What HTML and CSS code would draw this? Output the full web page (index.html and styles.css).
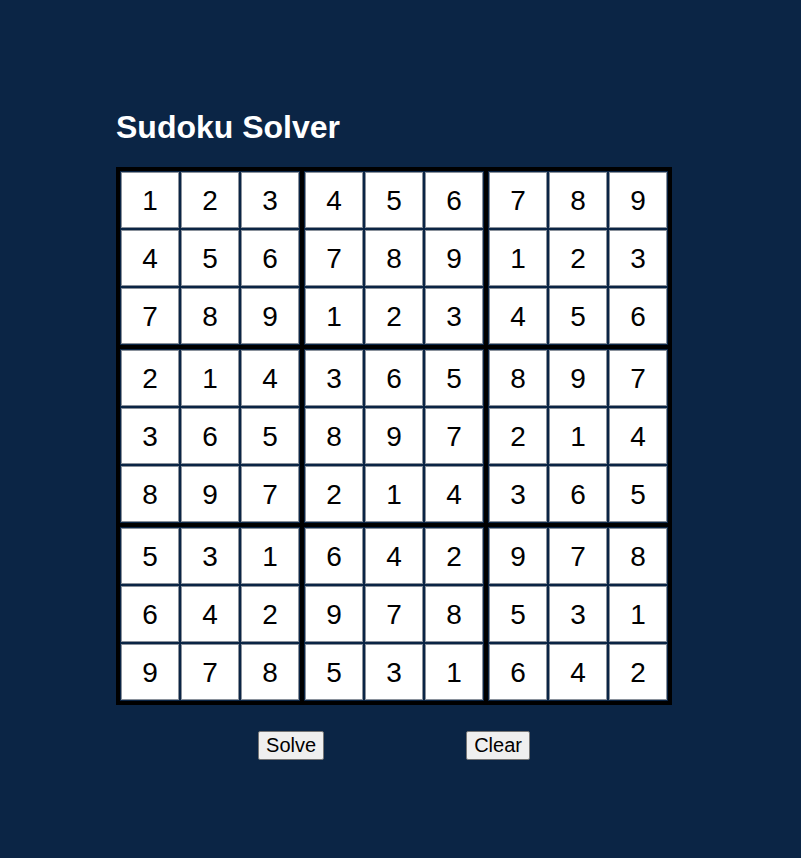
FILE: index.html
```html
<!DOCTYPE html>
<html lang="en">
<head>
<meta charset="utf-8">
<title>Sudoku Solver</title>
<link rel="stylesheet" href="styles.css">
</head>
<body>
<div class="app">
  <h1 class="title">Sudoku Solver</h1>
  <div class="board">
    <div class="block"><div class="cell">1</div><div class="cell">2</div><div class="cell">3</div><div class="cell">4</div><div class="cell">5</div><div class="cell">6</div><div class="cell">7</div><div class="cell">8</div><div class="cell">9</div></div>
    <div class="block"><div class="cell">4</div><div class="cell">5</div><div class="cell">6</div><div class="cell">7</div><div class="cell">8</div><div class="cell">9</div><div class="cell">1</div><div class="cell">2</div><div class="cell">3</div></div>
    <div class="block"><div class="cell">7</div><div class="cell">8</div><div class="cell">9</div><div class="cell">1</div><div class="cell">2</div><div class="cell">3</div><div class="cell">4</div><div class="cell">5</div><div class="cell">6</div></div>
    <div class="block"><div class="cell">2</div><div class="cell">1</div><div class="cell">4</div><div class="cell">3</div><div class="cell">6</div><div class="cell">5</div><div class="cell">8</div><div class="cell">9</div><div class="cell">7</div></div>
    <div class="block"><div class="cell">3</div><div class="cell">6</div><div class="cell">5</div><div class="cell">8</div><div class="cell">9</div><div class="cell">7</div><div class="cell">2</div><div class="cell">1</div><div class="cell">4</div></div>
    <div class="block"><div class="cell">8</div><div class="cell">9</div><div class="cell">7</div><div class="cell">2</div><div class="cell">1</div><div class="cell">4</div><div class="cell">3</div><div class="cell">6</div><div class="cell">5</div></div>
    <div class="block"><div class="cell">5</div><div class="cell">3</div><div class="cell">1</div><div class="cell">6</div><div class="cell">4</div><div class="cell">2</div><div class="cell">9</div><div class="cell">7</div><div class="cell">8</div></div>
    <div class="block"><div class="cell">6</div><div class="cell">4</div><div class="cell">2</div><div class="cell">9</div><div class="cell">7</div><div class="cell">8</div><div class="cell">5</div><div class="cell">3</div><div class="cell">1</div></div>
    <div class="block"><div class="cell">9</div><div class="cell">7</div><div class="cell">8</div><div class="cell">5</div><div class="cell">3</div><div class="cell">1</div><div class="cell">6</div><div class="cell">4</div><div class="cell">2</div></div>
  </div>
  <div class="actions">
    <button class="btn" type="button">Solve</button>
    <button class="btn" type="button">Clear</button>
  </div>
</div>
</body>
</html>
```

FILE: styles.css
```css
html, body {
  margin: 0;
  padding: 0;
  background: #0b2545;
  font-family: "Liberation Sans", Arial, sans-serif;
}

.app {
  padding: 109px 0 0 116px;
  width: 556px;
}

.title {
  margin: 0 0 21px 0;
  font-size: 32px;
  font-weight: bold;
  color: #ffffff;
  line-height: 37px;
}

.board {
  display: grid;
  grid-template-columns: repeat(3, 180px);
  gap: 4px;
  border: 4px solid #000;
  background: #000;
  width: 548px;
}

.block {
  display: grid;
  grid-template-columns: repeat(3, 58px);
  grid-auto-rows: 56px;
  gap: 2px;
  padding: 1px;
  background: #0b2545;
}

.cell {
  box-sizing: border-box;
  background: #ffffff;
  border: 1px solid #8a919b;
  display: flex;
  align-items: center;
  justify-content: center;
  font-size: 28px;
  color: #000;
  padding-top: 2px;
}

.actions {
  display: flex;
  justify-content: space-evenly;
  margin-top: 26px;
}

.btn {
  font-family: "Liberation Sans", Arial, sans-serif;
  font-size: 20px;
  color: #000;
  background: #efefef;
  border: 1px solid #767676;
  border-radius: 2px;
  padding: 2px 7px;
  line-height: 23px;
}
```
